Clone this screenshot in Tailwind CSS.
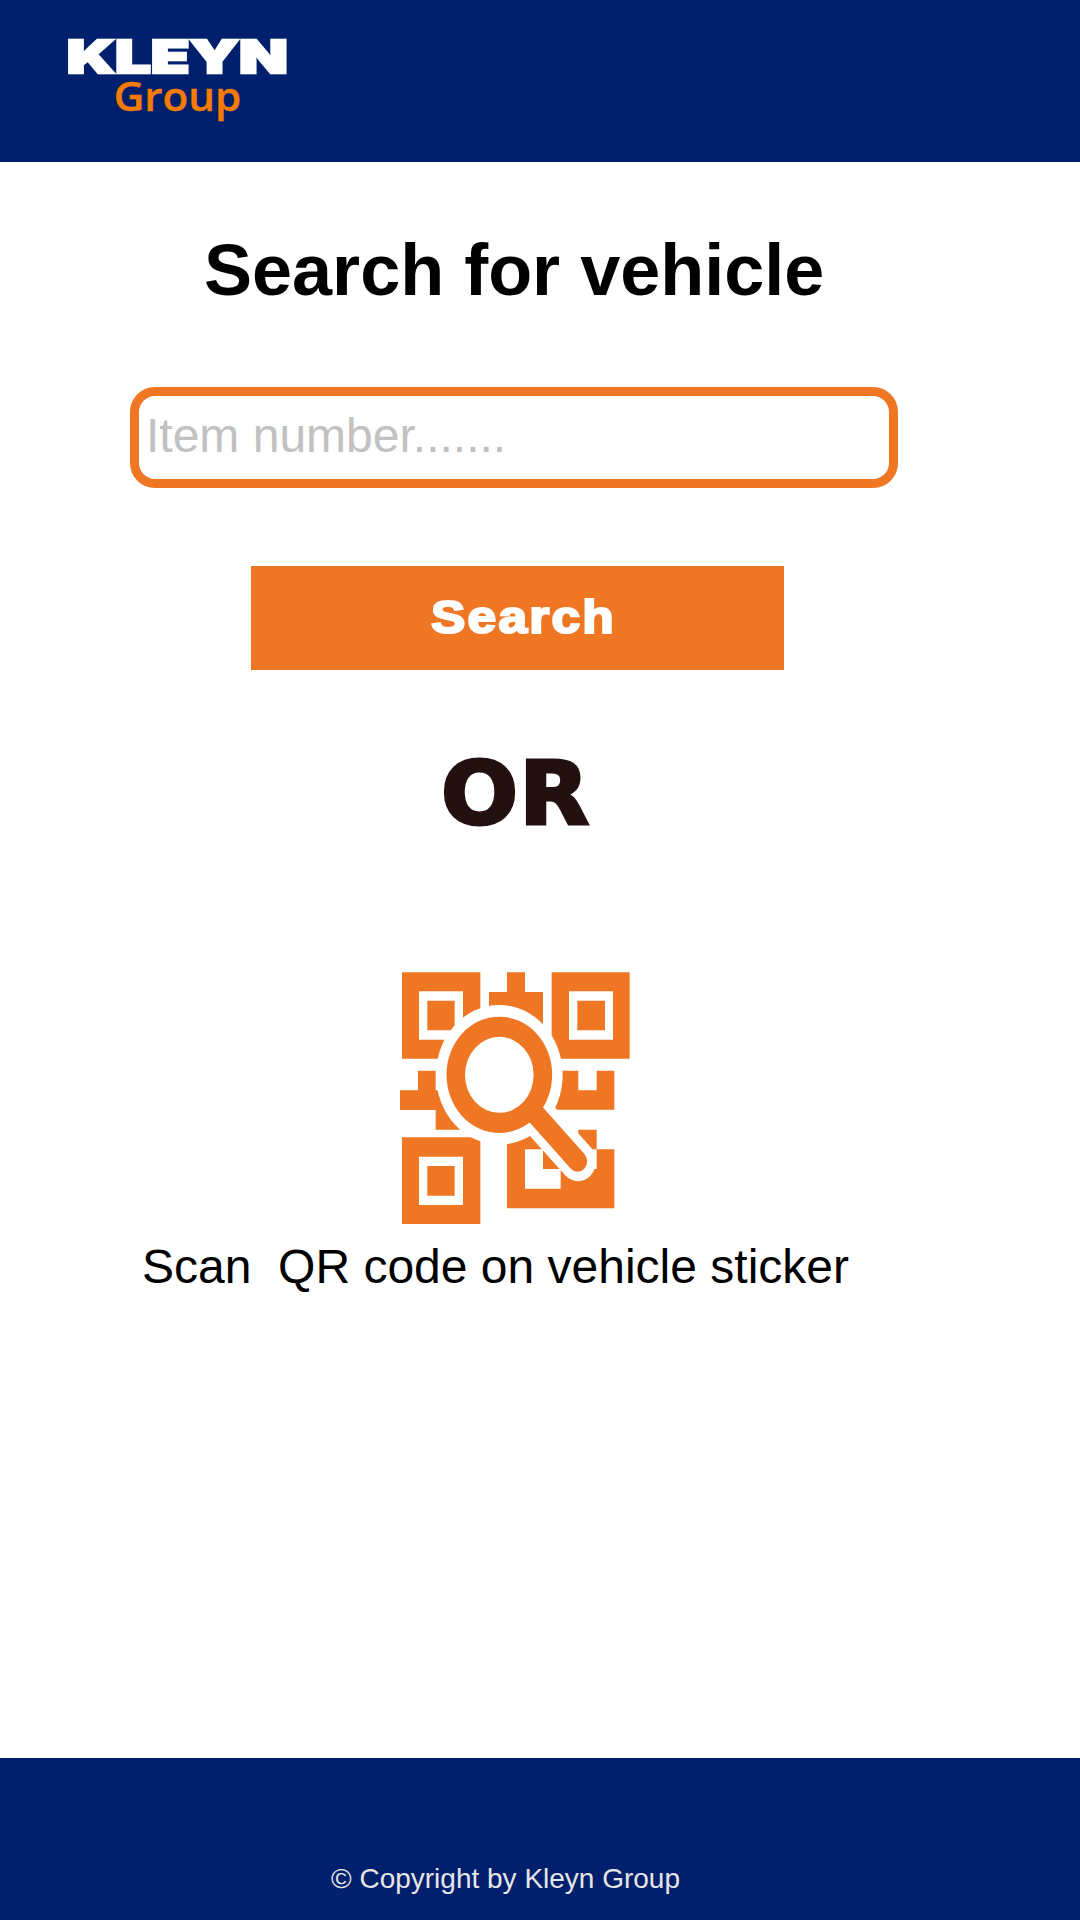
<!DOCTYPE html>
<html lang="en">
<head>
<meta charset="utf-8">
<meta name="viewport" content="width=device-width, initial-scale=1">
<title>Kleyn Group - Search for vehicle</title>
<script src="https://cdn.jsdelivr.net/npm/@tailwindcss/browser@4"></script>
</head>
<body class="bg-white font-['Liberation_Sans',Arial,sans-serif]">
<div class="flex h-[1920px] w-[1080px] flex-col overflow-hidden">
  <header class="h-[162px] shrink-0 bg-[#001f6c] pt-[20px] pl-[50px]">
    <svg class="block h-[120px] w-[260px] overflow-visible" viewBox="50 20 260 120" role="img" aria-label="Kleyn Group">
      <text x="66.8" y="72.5" textLength="221" lengthAdjust="spacingAndGlyphs" font-family="Inter, sans-serif" font-weight="900" font-size="46" fill="#fff" stroke="#fff" stroke-width="2.4">KLEYN</text>
      <text x="113.8" y="111" textLength="127.5" lengthAdjust="spacingAndGlyphs" font-family="'Open Sans', sans-serif" font-weight="600" font-size="40.5" fill="#f57c00" stroke="#f57c00" stroke-width="0.4">Group</text>
    </svg>
  </header>

  <main class="flex h-[1596px] shrink-0 flex-col items-start">
    <h1 class="mt-[72px] ml-[204px] text-[72px] leading-[72px] font-bold whitespace-nowrap text-black">Search for vehicle</h1>

    <input type="text" placeholder="Item number......." class="mt-[81px] ml-[130px] h-[101px] w-[768px] rounded-[25px] border-[9.5px] border-[#ef7622] bg-white pr-2 pb-[4px] pl-[7px] text-[48px] text-black outline-none placeholder:text-[#c1c1c1]">

    <button type="button" class="mt-[78px] ml-[251px] flex h-[104px] w-[533px] items-center justify-center bg-[#ef7622] text-white">
      <svg class="h-[60px] w-[200px] overflow-visible" viewBox="0 0 200 60">
        <text x="13" y="44.6" textLength="185" lengthAdjust="spacingAndGlyphs" letter-spacing="2" font-family="'Liberation Sans', Arial, sans-serif" font-weight="700" font-size="46" fill="currentColor" stroke="currentColor" stroke-width="2.2">Search</text>
      </svg>
    </button>

    <div class="mt-[50px] ml-[400px] h-[140px] w-[230px]">
      <svg class="block h-full w-full overflow-visible" viewBox="-20 -20 230 140">
        <text x="21" y="84" textLength="149" lengthAdjust="spacingAndGlyphs" letter-spacing="1" font-family="'DejaVu Sans', sans-serif" font-weight="700" font-size="88" fill="#231011" stroke="#231011" stroke-width="3.2">OR</text>
      </svg>
    </div>

    <svg class="mt-[112px] ml-[400px] block h-[252px] w-[230px] shrink-0" viewBox="30 36 690 756" fill="#ef7622" role="img" aria-label="QR code">
      <!-- finder squares -->
      <path fill-rule="evenodd" d="M36 37H271V296H36ZM87 94V239H219V94ZM112 122H194V211H112Z"/>
      <path fill-rule="evenodd" d="M36 532H271V792H36ZM87 590V735H219V590ZM112 618H194V707H112Z"/>
      <path fill-rule="evenodd" d="M485 37H719V296H485ZM537 94V239H669V94ZM562 122H645V211H562Z"/>
      <!-- data modules -->
      <path d="M351 37H405V96H459V260H297V96H351Z"/>
      <path d="M84 332H137V391H250V509H137V450H30V391H84Z"/>
      <path d="M470 332H565V391H620V332H673V449H470Z"/>
      <path d="M351 500H459V568H405V686H512V627H620V568H673V745H351Z"/>
      <path d="M459 568H512V627H459ZM565 509H620V568H565Z"/>
      <!-- magnifier -->
      <ellipse cx="328" cy="344.5" rx="190" ry="209.5" fill="#fff"/>
      <g transform="scale(1 1.104)" stroke-linecap="round">
        <path d="M440 422L564 547" stroke="#fff" stroke-width="108"/>
        <path d="M420 402L563 547" stroke="#ef7622" stroke-width="57"/>
      </g>
      <ellipse cx="328" cy="344.5" rx="158.5" ry="174.5"/>
      <ellipse cx="328" cy="344.5" rx="103" ry="114" fill="#fff"/>
    </svg>

    <p class="mt-[19px] ml-[142px] text-[48px] leading-[48px] whitespace-pre text-black">Scan  QR code on vehicle sticker</p>
  </main>

  <footer class="h-[162px] shrink-0 bg-[#001f6c] pt-[107px] pl-[331px] text-[28px] leading-none whitespace-nowrap text-[#e6e6e6]">© Copyright by Kleyn Group</footer>
</div>
</body>
</html>
